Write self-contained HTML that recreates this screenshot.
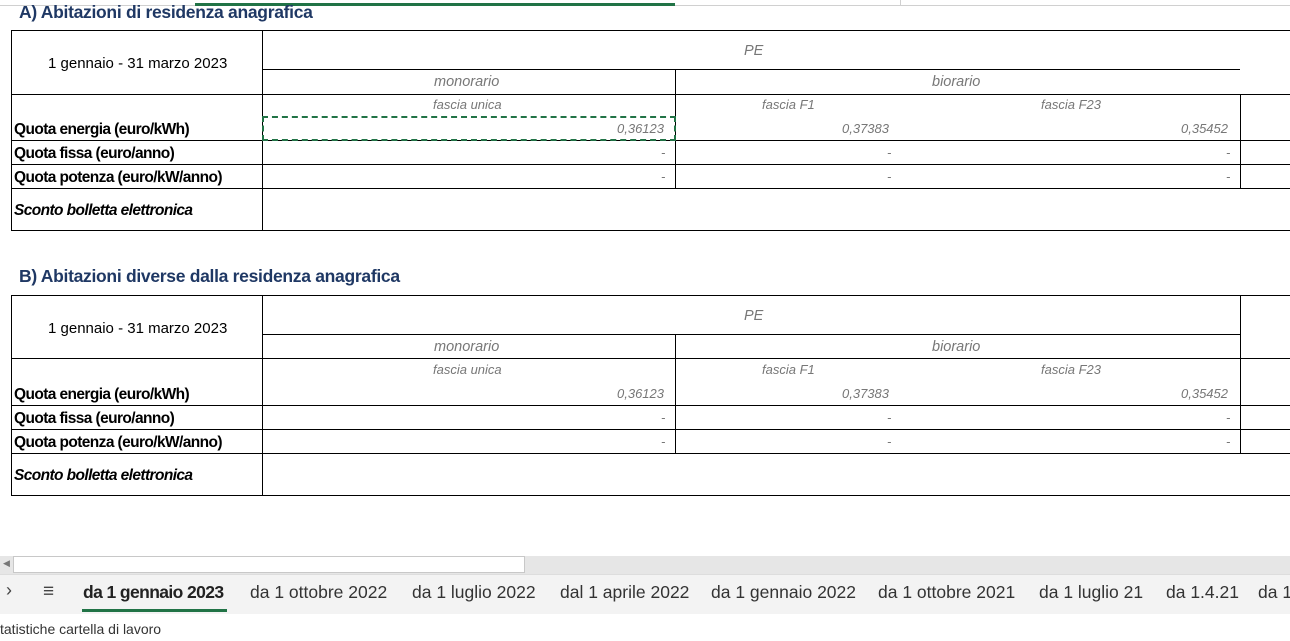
<!DOCTYPE html>
<html><head><meta charset="utf-8"><style>
body{margin:0;width:1290px;height:641px;overflow:hidden;background:#fff;font-family:"Liberation Sans",sans-serif;position:relative}
.a{position:absolute}
.h{position:absolute;height:1px;background:#000}
.v{position:absolute;width:1px;background:#000}
.t{position:absolute;white-space:nowrap;font-size:15px;color:#000}
.g{color:#777;font-style:italic;font-size:13px}
.b{font-weight:bold;font-size:15.5px;letter-spacing:-0.6px}
.tt{font-size:17.5px;font-weight:bold;color:#1f3864;letter-spacing:-0.3px}
.tab{position:absolute;top:582px;font-size:17.5px;color:#333;white-space:nowrap}
</style></head><body>
<div class="a" style="left:0;top:5px;width:1290px;height:1px;background:#d0d0d0"></div>
<div class="a" style="left:195px;top:3px;width:480px;height:3px;background:#217346"></div>
<div class="a" style="left:900px;top:0;width:1px;height:5px;background:#d0d0d0"></div>

<div class="t tt" style="left:19px;top:2px">A) Abitazioni di residenza anagrafica</div>
<div class="h" style="left:11px;top:30px;width:1279px"></div>
<div class="h" style="left:262px;top:69px;width:978px"></div>
<div class="h" style="left:11px;top:94px;width:1279px"></div>
<div class="h" style="left:11px;top:140px;width:1279px"></div>
<div class="h" style="left:11px;top:164px;width:1279px"></div>
<div class="h" style="left:11px;top:188px;width:1279px"></div>
<div class="h" style="left:11px;top:230px;width:1279px"></div>
<div class="v" style="left:11px;top:30px;height:201px"></div>
<div class="v" style="left:262px;top:30px;height:201px"></div>
<div class="v" style="left:675px;top:69px;height:120px"></div>
<div class="v" style="left:1240px;top:94px;height:95px"></div>
<div class="a" style="left:262px;top:116px;width:410px;height:21px;border:2px dashed #217346"></div>
<div class="t" style="left:48px;top:55px">1 gennaio - 31 marzo 2023</div>
<div class="t g" style="left:744px;top:43px;font-size:14.5px">PE</div>
<div class="t g" style="left:434px;top:74px;font-size:14.5px">monorario</div>
<div class="t g" style="left:932px;top:74px;font-size:14.5px">biorario</div>
<div class="t g" style="left:433px;top:97px">fascia unica</div>
<div class="t g" style="left:762px;top:97px">fascia F1</div>
<div class="t g" style="left:1041px;top:97px">fascia F23</div>
<div class="t g" style="left:617px;top:121px">0,36123</div>
<div class="t g" style="left:842px;top:121px">0,37383</div>
<div class="t g" style="left:1181px;top:121px">0,35452</div>
<div class="t g" style="left:661px;top:145px">-</div><div class="t g" style="left:887px;top:145px">-</div><div class="t g" style="left:1226px;top:145px">-</div>
<div class="t g" style="left:661px;top:169px">-</div><div class="t g" style="left:887px;top:169px">-</div><div class="t g" style="left:1226px;top:169px">-</div>
<div class="t b" style="left:14px;top:121px">Quota energia (euro/kWh)</div>
<div class="t b" style="left:14px;top:145px">Quota fissa (euro/anno)</div>
<div class="t b" style="left:14px;top:169px">Quota potenza (euro/kW/anno)</div>
<div class="t b" style="left:14px;top:202px;font-style:italic">Sconto bolletta elettronica</div>

<div class="t tt" style="left:19px;top:266px">B) Abitazioni diverse dalla residenza anagrafica</div>
<div class="h" style="left:11px;top:295px;width:1279px"></div>
<div class="h" style="left:262px;top:334px;width:978px"></div>
<div class="h" style="left:11px;top:358px;width:1279px"></div>
<div class="h" style="left:11px;top:405px;width:1279px"></div>
<div class="h" style="left:11px;top:429px;width:1279px"></div>
<div class="h" style="left:11px;top:453px;width:1279px"></div>
<div class="h" style="left:11px;top:495px;width:1279px"></div>
<div class="v" style="left:11px;top:295px;height:201px"></div>
<div class="v" style="left:262px;top:295px;height:201px"></div>
<div class="v" style="left:675px;top:334px;height:120px"></div>
<div class="v" style="left:1240px;top:295px;height:159px"></div>
<div class="t" style="left:48px;top:320px">1 gennaio - 31 marzo 2023</div>
<div class="t g" style="left:744px;top:308px;font-size:14.5px">PE</div>
<div class="t g" style="left:434px;top:339px;font-size:14.5px">monorario</div>
<div class="t g" style="left:932px;top:339px;font-size:14.5px">biorario</div>
<div class="t g" style="left:433px;top:362px">fascia unica</div>
<div class="t g" style="left:762px;top:362px">fascia F1</div>
<div class="t g" style="left:1041px;top:362px">fascia F23</div>
<div class="t g" style="left:617px;top:386px">0,36123</div>
<div class="t g" style="left:842px;top:386px">0,37383</div>
<div class="t g" style="left:1181px;top:386px">0,35452</div>
<div class="t g" style="left:661px;top:410px">-</div><div class="t g" style="left:887px;top:410px">-</div><div class="t g" style="left:1226px;top:410px">-</div>
<div class="t g" style="left:661px;top:434px">-</div><div class="t g" style="left:887px;top:434px">-</div><div class="t g" style="left:1226px;top:434px">-</div>
<div class="t b" style="left:14px;top:386px">Quota energia (euro/kWh)</div>
<div class="t b" style="left:14px;top:410px">Quota fissa (euro/anno)</div>
<div class="t b" style="left:14px;top:434px">Quota potenza (euro/kW/anno)</div>
<div class="t b" style="left:14px;top:467px;font-style:italic">Sconto bolletta elettronica</div>

<div class="a" style="left:0;top:556px;width:1290px;height:18px;background:#e6e6e6"></div>
<div class="a" style="left:13px;top:556px;width:512px;height:17px;background:#fff;border:1px solid #c8c8c8;box-sizing:border-box"></div>
<div class="t" style="left:3px;top:558px;font-size:9px;color:#777">◀</div>
<div class="a" style="left:0;top:574px;width:1290px;height:40px;background:#f3f3f3;border-top:1px solid #ddd;box-sizing:border-box"></div>
<div class="t" style="left:6px;top:580px;font-size:18px;color:#444">›</div>
<div class="t" style="left:43px;top:581px;font-size:19px;color:#444">≡</div>
<div class="tab" style="left:83px;font-weight:bold;color:#222;letter-spacing:-0.6px">da 1 gennaio 2023</div>
<div class="a" style="left:82px;top:609px;width:145px;height:3px;background:#217346"></div>
<div class="tab" style="left:250px">da 1 ottobre 2022</div>
<div class="tab" style="left:412px">da 1 luglio 2022</div>
<div class="tab" style="left:560px">dal 1 aprile 2022</div>
<div class="tab" style="left:711px">da 1 gennaio 2022</div>
<div class="tab" style="left:878px">da 1 ottobre 2021</div>
<div class="tab" style="left:1039px">da 1 luglio 21</div>
<div class="tab" style="left:1166px">da 1.4.21</div>
<div class="tab" style="left:1258px">da 1</div>
<div class="a" style="left:0;top:614px;width:1290px;height:27px;background:#fff"></div>
<div class="t" style="left:0;top:621px;font-size:14px;color:#333">tatistiche cartella di lavoro</div>
</body></html>
